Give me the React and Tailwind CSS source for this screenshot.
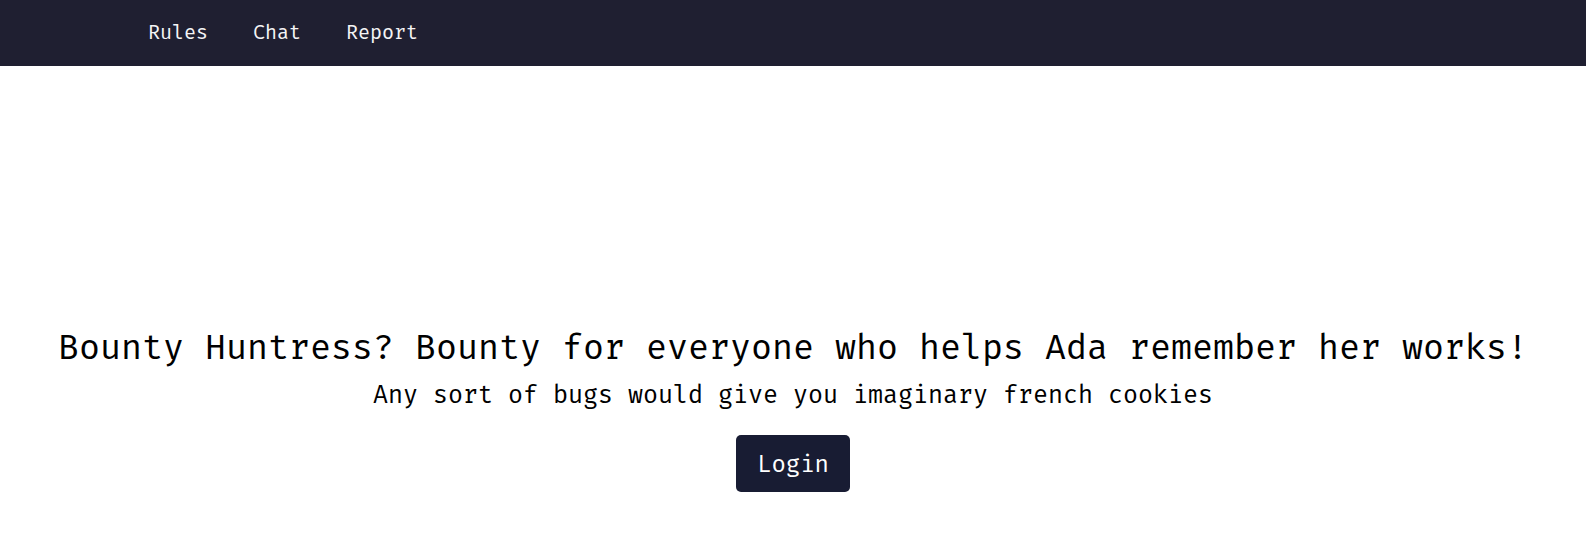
import React from "react";

const mono = "font-['Fira_Mono','DejaVu_Sans_Mono',monospace]";

const NavBar = () => {
  const links = ["Rules", "Chat", "Report"];
  return (
    <nav className="h-[66px] bg-[#1f1f31] flex items-center">
      <ul className="flex items-center gap-[45px] ml-[148px]">
        {links.map((l) => (
          <li key={l}>
            <a className={`${mono} text-[20px] leading-[24px] text-[#f4f4f6]`} href="#">
              {l}
            </a>
          </li>
        ))}
      </ul>
    </nav>
  );
};

export default function App() {
  return (
    <div className={`min-h-screen bg-white ${mono}`}>
      <NavBar />
      <main className="flex flex-col items-center pt-[261px] text-black">
        <h1 className="text-[35px] leading-[40px] font-normal">
          Bounty Huntress? Bounty for everyone who helps Ada remember her works!
        </h1>
        <p className="mt-[13px] text-[25px] leading-[30px]">
          Any sort of bugs would give you imaginary french cookies
        </p>
        <button className="mt-[25px] h-[57px] px-[21px] rounded-[5px] bg-[#181c33] text-white text-[24px] leading-[30px]">
          Login
        </button>
      </main>
    </div>
  );
}
